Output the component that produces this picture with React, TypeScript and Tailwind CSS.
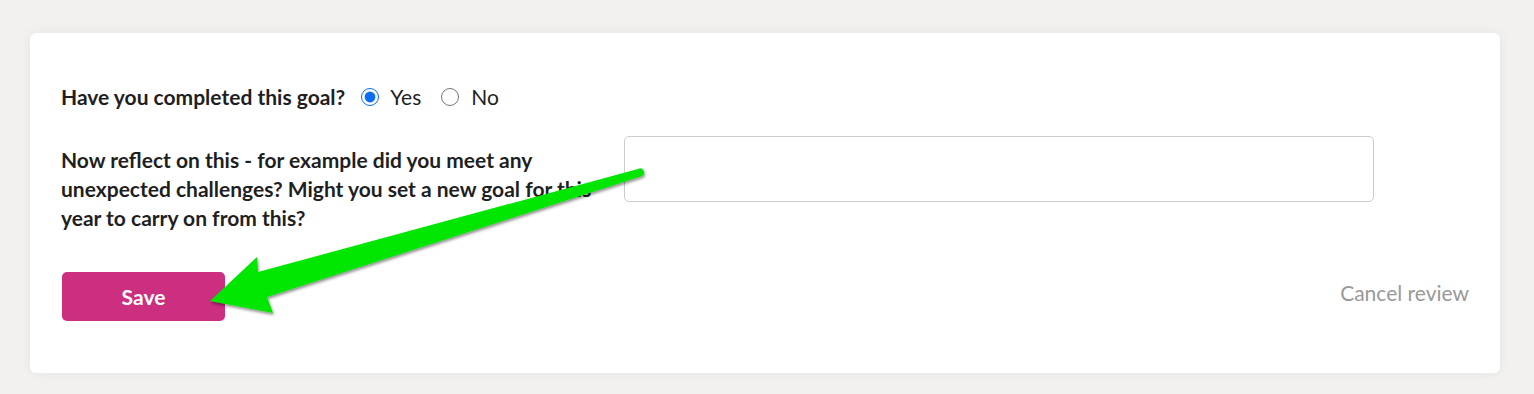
import { useState } from 'react';

function Arrow() {
  return (
    <svg
      className="pointer-events-none absolute left-0 top-0"
      width={1534}
      height={394}
      viewBox="0 0 1534 394"
    >
      <defs>
        <filter id="arrow-shadow" x="-10%" y="-10%" width="120%" height="130%">
          <feDropShadow dx="1" dy="2" stdDeviation="1.5" floodColor="#000" floodOpacity="0.45" />
        </filter>
      </defs>
      <path
        d="M638 169 L258 272 L257 257 L210 301 L273 313 L267 297 L642 176 A3.6 3.6 0 0 0 638 169 Z"
        fill="#00e600"
        filter="url(#arrow-shadow)"
      />
    </svg>
  );
}

export default function App() {
  const [done, setDone] = useState<'yes' | 'no'>('yes');
  const [reflection, setReflection] = useState('');

  return (
    <div
      className="relative h-[394px] w-[1534px] bg-[#f2f1f0] pt-[33px] pl-[30px] text-[#1f1f1f]"
      style={{ fontFamily: 'Lato, "Open Sans", sans-serif' }}
    >
      <div className="h-[340px] w-[1470px] rounded-md bg-white px-[31px] pt-[50px] shadow-[0_0_12px_rgba(0,0,0,0.06)]">
        {/* Completed? */}
        <div className="flex h-[28px] items-center text-[21px]">
          <span className="font-bold">Have you completed this goal?</span>
          <label className="ml-[16px] flex items-center">
            <input
              type="radio"
              name="done"
              checked={done === 'yes'}
              onChange={() => setDone('yes')}
              className="m-0 h-[18px] w-[18px] accent-[#0b6cf5]"
            />
            <span className="ml-[11px]">Yes</span>
          </label>
          <label className="ml-[20px] flex items-center">
            <input
              type="radio"
              name="done"
              checked={done === 'no'}
              onChange={() => setDone('no')}
              className="m-0 h-[18px] w-[18px] accent-[#0b6cf5]"
            />
            <span className="ml-[12px]">No</span>
          </label>
        </div>

        {/* Reflection */}
        <div className="mt-[25px] flex items-start">
          <p className="mt-[9px] w-[545px] text-[21px] font-bold leading-[29px]">
            Now reflect on this - for example did you meet any unexpected challenges? Might you set a new goal for this
            year to carry on from this?
          </p>
          <textarea
            value={reflection}
            onChange={(e) => setReflection(e.target.value)}
            className="ml-[18px] h-[66px] w-[750px] resize-none rounded-[5px] border border-[#cccccc] px-3 py-2 text-[16px] outline-none"
          />
        </div>

        {/* Actions */}
        <div className="mt-[40px] flex items-center justify-between">
          <button className="ml-px h-[49px] w-[163px] rounded-[5px] bg-[#cc2e80] text-[21px] font-bold text-white">
            Save
          </button>
          <button className="mb-[7px] text-[21px] text-[#999]">Cancel review</button>
        </div>
      </div>
      <Arrow />
    </div>
  );
}
